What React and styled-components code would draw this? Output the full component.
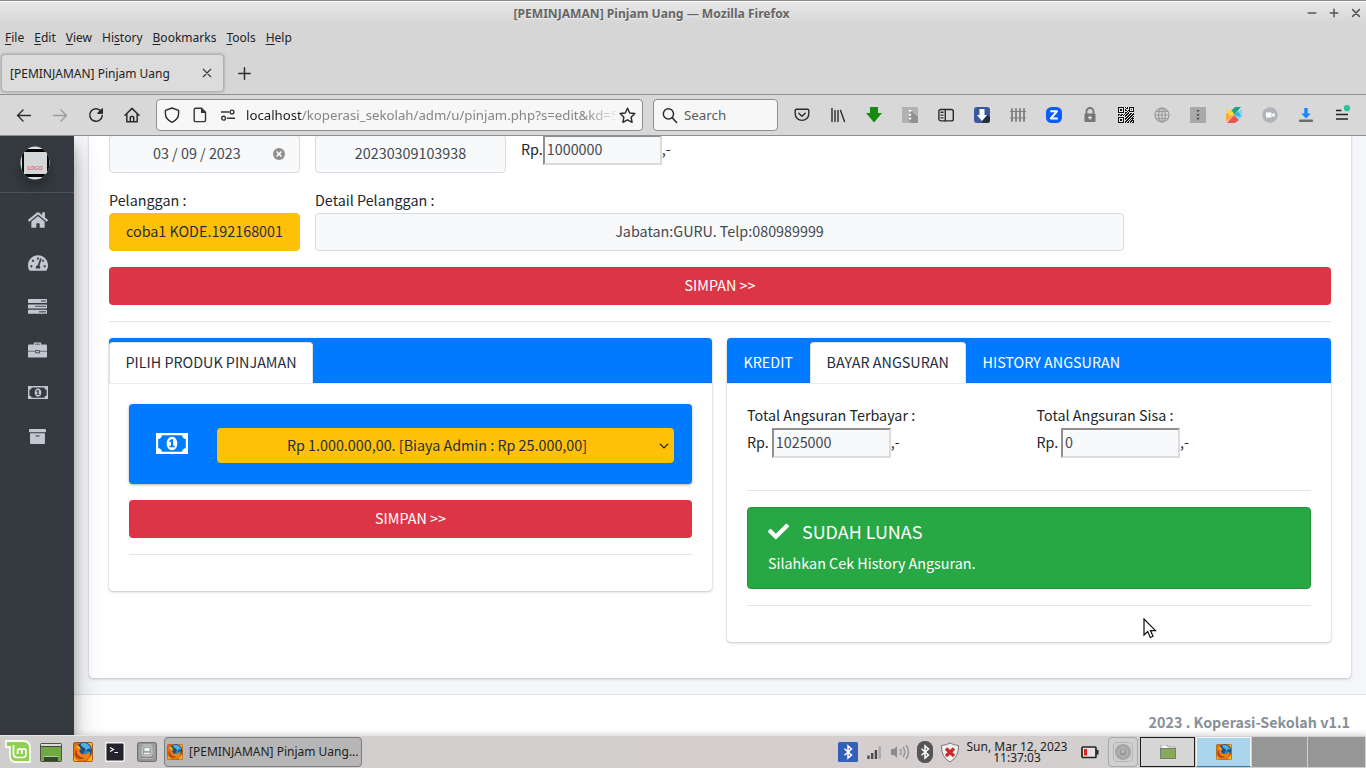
import React from "react";
import styled, { createGlobalStyle } from "styled-components";
import { FaHome, FaTachometerAlt, FaArchive, FaCheck } from "react-icons/fa";

const Global = createGlobalStyle`
  * { box-sizing: border-box; }
  body { margin: 0; overflow: hidden; }
  button, input { font: inherit; }
  svg { display: block; flex: none; }
`;

const Desktop = styled.div`
  width: 1366px; height: 768px; display: flex; flex-direction: column; overflow: hidden;
  font-family: "Noto Sans", sans-serif; font-size: 12px; color: #222; background: #d6d6d6;
`;

/* ---------- browser chrome ---------- */
const TitleBar = styled.header`
  height: 27px; flex: none; display: flex; align-items: center; padding: 0 2px 2px 0;
  border-top: 1px solid #8b8b8b; box-shadow: inset 0 1px #fff;
  background: linear-gradient(#e9e9e9, #d6d6d6 22px);
`;
const WindowTitle = styled.div`
  width: 1303px; text-align: center; font-weight: 700; font-size: 12.1px; color: #666;
  text-shadow: 0 1px #f0f0f0; white-space: nowrap;
`;
const WindowButtons = styled.div`display: flex; gap: 10px; margin-left: 3px;`;
const MenuBar = styled.nav`
  height: 21px; flex: none; display: flex; align-items: center; gap: 10px; padding-left: 5px;
  font-size: 12.02px; line-height: 20px;
  u { text-underline-offset: 2px; }
`;
const TabStrip = styled.div`
  height: 47px; flex: none; display: flex; align-items: center; padding: 5px 0 0 1px;
  border-bottom: 1px solid #8f8f8f;
`;
const Tab = styled.div`
  width: 223px; height: 38px; margin-bottom: 1px; border-radius: 4px; background: #dcdcdc; border: 1px solid #b3b3b3;
  box-shadow: 0 0 3px rgba(0,0,0,.3); display: flex; align-items: center;
  justify-content: space-between; padding: 0 11px 0 8px;
`;
const NewTab = styled.div`margin-left: 14px;`;
const Toolbar = styled.div`
  height: 41px; flex: none; display: flex; align-items: center; padding-left: 6px;
  background: #d8d8d8; border-bottom: 1px solid #8f8f8f;
`;
const ToolCell = styled.div`
  width: 36px; height: 32px; flex: none; display: flex; align-items: center; justify-content: center;
`;
const Field = styled.div`
  width: ${p => p.$w}px; height: 32px; flex: none; display: flex; align-items: center; gap: ${p => p.$gap}px;
  background: #f7f7f7; border: 1px solid #8f8f8f; border-radius: 4px; margin-left: ${p => p.$ml}px;
  padding: 0 6px 0 7px; font-size: 13.33px; color: #5b5b5b;
`;
const Url = styled.div`
  flex: 1; overflow: hidden; white-space: nowrap; margin: 0 -9px 0 -2px; color: #858585; font-size: 13.22px;
  -webkit-mask-image: linear-gradient(90deg, #000 338px, transparent 374px);
  b { font-weight: 400; color: #1c1c1c; }
`;
const Extensions = styled.div`display: flex; margin-left: 6px;`;

/* ---------- page ---------- */
const Viewport = styled.div`
  height: 599px; flex: none; display: flex; overflow: hidden; background: #f4f6f9; color: #212529;
  font-family: "Noto Sans CJK SC", sans-serif; font-size: 14.33px; line-height: 24px;
`;
const Sidebar = styled.aside`
  width: 74px; flex: none; background: #343a40; z-index: 2; color: #c2c7d0;
  box-shadow: 0 14px 28px rgba(0,0,0,.25), 0 10px 10px rgba(0,0,0,.22);
`;
const Brand = styled.div`
  height: 57px; border-bottom: 1px solid #4b545c; display: flex; justify-content: center; padding: 10px 4px 0 0;
  svg { filter: drop-shadow(0 8px 6px rgba(0,0,0,.25)); }
`;
const NavItem = styled.div`
  height: 43.3px; display: flex; align-items: center; justify-content: center; padding-left: 1px;
`;
const NavList = styled.div`padding-top: 5px;`;
const Main = styled.main`flex: 1; display: flex; flex-direction: column;`;
const PageCard = styled.section`
  margin: -5px 15px 0; height: 547px; background: #fff; border-radius: 4px; padding: 4px 20px 0; flex: none;
  box-shadow: 0 0 1px rgba(0,0,0,.25), 0 1px 3px rgba(0,0,0,.2);
`;
const Row = styled.div`display: flex; gap: 15px; align-items: flex-start; margin-bottom: ${p => p.$mb || 0}px;`;
const Group = styled.div`width: ${p => p.$w}px; flex: none;`;
const Label = styled.label`display: block; height: 24px; line-height: 22px; white-space: nowrap;`;
const Control = styled.div`
  width: ${p => p.$w}px; height: 38px; flex: none; border: 1px solid ${p => p.$warn ? "#ffc107" : "#d8dbdf"};
  border-radius: 4px; background: ${p => p.$warn ? "#ffc107" : "#f8f9fa"};
  color: ${p => p.$warn ? "#1f2d3d" : "#42484e"}; padding-bottom: 2px;
  display: flex; align-items: center; justify-content: center; white-space: nowrap;
`;
const DateControl = styled(Control)`
  justify-content: space-between; padding: 0 13px 2px 43px;
  svg { margin-top: 2px; }
`;
const Money = styled.div`display: flex; height: 30px; line-height: 28px;`;
const MoneyInput = styled.div`
  width: 119px; height: 30px; border: 2px solid; border-color: #8f8f8f #dcdcdc #dcdcdc #8f8f8f;
  background: #f8f9fa; color: #42484e; padding: 0 2px; line-height: 24px; margin-left: ${p => p.$ml}px;
`;
const DangerButton = styled.button`
  display: block; width: 100%; height: 38px; border: 0; border-radius: 4px; background: #dc3545; color: #fff; padding: 0 0 2px;
`;
const Rule = styled.hr`
  border: 0; height: 1px; background: #e3e4e5; margin: ${p => p.$m || "16px 0"};
`;
const TabCard = styled.section`
  width: ${p => p.$w}px; height: ${p => p.$h}px; flex: none; background: #fff; border-radius: 4px;
  box-shadow: 0 0 1px rgba(0,0,0,.3), 0 1px 3px rgba(0,0,0,.2);
`;
const TabHead = styled.div`
  height: 45px; background: #007bff; border-radius: 4px 4px 0 0; padding-top: 4px; display: flex;
`;
const TabLink = styled.div`
  width: ${p => p.$w}px; height: 41px; line-height: 37px; padding-left: 15.5px; white-space: nowrap;
  border: 1px solid ${p => p.$active ? "#dee2e6" : "transparent"}; border-bottom: 0; border-radius: 4px 4px 0 0;
  background: ${p => p.$active ? "#fff" : "transparent"}; color: ${p => p.$active ? "#1f2d3d" : "#fff"};
`;
const TabBody = styled.div`padding: 20px 20px 0; border-top: 1px solid #e8ebee;`;
const InfoBox = styled.div`
  height: 80px; border-radius: 4px; background: #007bff; box-shadow: 0 0 1px rgba(0,0,0,.125), 0 1px 3px rgba(0,0,0,.3);
  display: flex; align-items: center; color: #fff; padding: 0 18px 0 27px; justify-content: space-between; margin-bottom: 16px;
`;
const Select = styled.div`
  width: 457px; height: 35px; margin-top: 3px; border-radius: 4px; background: #ffc107; color: #1f2d3d;
  display: flex; align-items: center; padding: 0 5px 0 0;
  span { flex: 1; text-align: center; padding-bottom: 2px; padding-right: 2px; }
`;
const Alert = styled.div`
  height: 82px; background: #28a745; border: 1px solid #23923d; border-radius: 4px; color: #fff; padding: 11px 20px;
`;
const AlertTitle = styled.h5`
  margin: 0 0 8px; font-size: 17.95px; font-weight: 400; line-height: 24px; display: flex; align-items: center; gap: 13px;
`;
const Footer = styled.footer`
  margin-top: 16px; flex: 1; border-top: 1px solid #dee2e6; background: #fff; text-align: right;
  padding: 15px 16px 0 0; font-weight: 700; color: #869099; line-height: 24px;
`;

/* ---------- desktop panel ---------- */
const Panel = styled.footer`
  height: 33px; flex: none; display: flex; align-items: center; border-top: 1px solid #e7e5e5;
  background: linear-gradient(90deg, #d0cecd, #d3cecd 50%, #d5cfcf 75%, #d0d0d0 85%); position: relative; z-index: 5;
  box-shadow: 0 -2px 5px rgba(0,0,0,.12);
`;
const Launcher = styled.div`width: ${p => p.$w || 32}px; display: flex; justify-content: center; flex: none;`;
const TaskButton = styled.div`
  width: 198px; height: 30px; margin-left: 1px; border: 1px solid #7d7d7d; border-radius: 4px; background: #b6b6b6;
  display: flex; align-items: center; gap: 6px; padding-left: 2px; white-space: nowrap; font-size: 12px;
  span { margin-top: -2px; }
`;
const Tray = styled.div`margin-left: auto; display: flex; align-items: center; height: 32px;`;
const TrayIcons = styled.div`display: flex; align-items: center; gap: 7px;`;
const Clock = styled.div`
  width: 106px; margin-left: 4px; text-align: center; font-size: 12px; line-height: 11px; white-space: nowrap; padding-bottom: 1px;
`;
const PanelToggle = styled.div`
  width: 30px; height: 30px; margin-left: 9px; border: 1px solid #a8a8a8; border-radius: 4px;
  display: flex; align-items: center; justify-content: center;
`;
const Workspace = styled.div`
  width: ${p => p.$w || 55}px; height: 30px; margin-left: ${p => p.$ml || 1}px; background: ${p => p.$bg};
  border: ${p => p.$border || "0"}; border-bottom: ${p => p.$bottom || p.$border || "0"};
  display: flex; align-items: center; justify-content: center;
`;
const Pointer = styled.svg`position: absolute; left: 1143px; top: 618px; z-index: 9;`;

/* ---------- drawings ---------- */
const Line = ({ d, s = 16, w = 1.4, c = "#2b2b2b", children }) => (
  <svg width={s} height={s} viewBox="0 0 16 16" fill="none" stroke={c} strokeWidth={w} strokeLinecap="round" strokeLinejoin="round">
    {d && <path d={d} />}{children}
  </svg>
);
const Close = ({ s = 10, c = "#333", w = 1.6 }) => <Line s={s} w={w} c={c} d="M2 2L14 14M14 2L2 14" />;
const Banknote = ({ w = 32 }) => (
  <svg width={w} height={w * 0.66} viewBox="0 0 32 21" fill="currentColor">
    <path fillRule="evenodd" d="M0 0h32v21H0zM6 2.200Q5.500 5.500 2.200 6v9Q5.500 15.500 6 18.800h20Q26.500 15.500 29.800 15V6Q26.500 5.500 26 2.200z" />
    <path fillRule="evenodd" d="M16 3.800c3.300 0 5.300 3 5.300 6.700s-2 6.700-5.300 6.700-5.300-3-5.300-6.700 2-6.700 5.300-6.700zM13.300 7.600v1.600l1.700-.5v3.900h-1.700v1.500h5.500v-1.500h-1.700V6.300h-1.500z" />
  </svg>
);
const Firefox = ({ s = 20 }) => (
  <svg width={s} height={s} viewBox="0 0 20 20">
    <rect x=".5" y=".5" width="19" height="19" rx="1.5" fill="#d9690c" stroke="#a85a16" />
    <path d="M1 13c1 4 3 6 7 6H1zM19 8V1h-6c4 1 5 3 6 7zM19 13v6h-5z" fill="#fbb616" />
    <circle cx="11" cy="8.300" r="8" fill="#1b4f86" />
    <path d="M8 1.500c5-1.500 9.500 1.500 9.500 6-2-2-3-1-4 1-2-1-1-3-3-3-2-1-3-2.500-2.500-4z" fill="#4fb2de" />
    <path d="M12 8c2 1 3 2 5 1-1 3-4 4-7 3z" fill="#2f86bd" />
    <path d="M2.500 2c1 2 2.500 1.500 3.700 3 1 1 2.300 1.600 1.300 2.800-2 .8-1 2.700 1 4 3 1.300 6 .3 8.500-2.300.5 5-2.500 9-7.500 9-7 0-10-9-7-16.500z" fill="#ee8212" />
    <path d="M3.500 6.500c-.5 5.500 2.500 9 8 9.500-3 2.200-7 1-9-2-1-3-.6-5.500 1-7.500z" fill="#bd3a12" />
    <path d="M4 3.500c2 0 3 2 3 3-2 0-3-1-3-3z" fill="#fccb35" />
  </svg>
);
const Bt = "M4.500 4.700l7 6.300L8 14V2l3.500 3-7 6.300";
const Logo = () => (
  <svg width="34" height="34" viewBox="0 0 34 34">
    <defs><clipPath id="round"><ellipse cx="17" cy="17" rx="14.5" ry="16.5" /></clipPath></defs>
    <g clipPath="url(#round)">
      <path fill="#d9dcdd" d="M0 0h34v34H0z" /><path fill="#080808" d="M0 3h34v3H0zM0 28h34v3H0zM4 6h2v22H4zM29 6h2v22h-2z" />
      <path fill="#d5d6d8" d="M6 6h23v22H6z" />
    </g>
    <text x="17" y="24.4" fontFamily="Lato" fontSize="5.4" fontWeight="700" fill="#df5c62" textAnchor="middle">LOGO</text>
  </svg>
);
const Bars = () => (
  <svg width="19" height="15" viewBox="0 0 19 15" fill="#c2c7d0">
    <rect width="19" height="4" rx=".6" /><rect y="5.4" width="19" height="4" rx=".6" /><rect y="10.8" width="19" height="4" rx=".6" />
    <path d="M13 1.3h5v1.4h-5zM7 6.7h11v1.4H7zM11 12.1h7v1.4h-7z" fill="#646a72" />
  </svg>
);
const Case = () => (
  <svg width="19" height="16" viewBox="0 0 19 16">
    <path d="M6.500 3V1.200h6V3" fill="none" stroke="#c2c7d0" strokeWidth="1.3" />
    <rect y="2.6" width="19" height="13" rx="1.2" fill="#c2c7d0" />
    <path d="M0 9.200h7M12 9.200h7" stroke="#6b7078" strokeWidth="1.1" /><path d="M7.500 8.600h4v2.300h-4z" fill="none" stroke="#4d535b" />
  </svg>
);
const Archive = ({ c, a, t }) => (
  <svg width="16" height="16" viewBox="0 0 16 16">
    <path fill={c} d="M0 0h16v16H0z" /><path fill={t} d="M9 4l7 6v6H9l-3-3z" opacity=".55" />
    <path d="M6.400 3h3.200L8 5.400zM6.400 7h3.200L8 9.400zM6.400 10.700h3.200L8 13.400z" fill={a} />
  </svg>
);
const qrRows = ["1111110101011111", "1000010011010001", "1011010100010101", "1011010110110001", "1000010001011111", "1111110110100000", "0000000101101101", "1101101011011011", "1011010110110110", "0000000101101101", "1111110011011010", "1000010110110111", "1011010101101010", "1011010011010111", "1000010110101101", "1111110101101011"];
const Qr = () => (
  <svg width="16" height="16" viewBox="0 0 16 16" shapeRendering="crispEdges">
    <path fill="#e6e6e6" d="M0 0h16v16H0z" />
    {qrRows.map((r, y) => [...r].map((v, x) => v === "1" && <rect key={x + "-" + y} x={x} y={y} width="1" height="1" fill="#111" />))}
  </svg>
);
const Pinwheel = () => (
  <svg width="16" height="16" viewBox="0 0 16 16">
    <path d="M8 8L5 4l4-4h6z" fill="#20a48b" /><path d="M8 8l8-6v8l-3 2z" fill="#72dcf1" /><path d="M8 8l4-4 3 6z" fill="#32b5d0" />
    <path d="M8 8l5 5-4 3H1z" fill="#ef5350" /><path d="M8 8L0 15V7l4-3z" fill="#ffa83e" /><path d="M0 1l7 4 1 3-5 1z" fill="#ffd83a" />
  </svg>
);
const Globe = () => (
  <Line c="#9b9b9b" w={1.2}><circle cx="8" cy="8" r="7" /><ellipse cx="8" cy="8" rx="3.4" ry="7" /><path d="M1 8h14M8 1v14M2 4.500h12M2 11.500h12" /></Line>
);
const extensions = [
  <Line w={1.4} d="M2.500 2.200h11a1.300 1.300 0 011.300 1.300V7a6.800 6.400 0 01-13.600 0V3.500a1.300 1.300 0 011.300-1.300zM4.800 6.200L8 9.300l3.200-3.100" />,
  <Line w={1.4} d="M2 1.500v13M5 3.500v11M8 3.500v11M10.500 3.500l4 11" />,
  <svg width="16" height="16" viewBox="0 0 16 16"><path d="M4 0h8v6h4l-8 9.500L0 6h4z" fill="#178a12" /></svg>,
  <Archive c="#b2b2b2" a="#fff" t="#777" />,
  <Line w={1.4}><rect x=".9" y="2.500" width="14.400" height="11.400" rx="2" /><path d="M7.300 2.500v11.400M3 5.300h2M3 8.100h2M3 10.900h2" /></Line>,
  <svg width="16" height="16" viewBox="0 0 16 16"><rect width="16" height="16" rx="3" fill="#3b5998" /><path d="M13 8l3 2v3q0 3-3 3H9l-1-2z" fill="#252e3c" /><path d="M5.500 2h5v6H13l-5 6-5-6h2.500z" fill="#fff" /></svg>,
  <Line c="#808080" w={1.1} d="M.5 4.500h15M.5 11h15"><path strokeWidth="1.8" d="M2 2v12M6 2v12M10 2v12M14 2v12" /></Line>,
  <svg width="16" height="16" viewBox="0 0 16 16"><rect width="16" height="16" rx="5.500" fill="#0b5cff" /><path d="M4.300 4.300h6.600l-6.100 7.200h7" fill="none" stroke="#fff" strokeWidth="2" strokeLinejoin="round" /></svg>,
  <svg width="16" height="16" viewBox="0 0 16 16"><path d="M4.500 7V4a3.500 3 0 017 0v3" fill="none" stroke="#757575" strokeWidth="1.8" /><rect x="2.500" y="6.500" width="11" height="8.500" rx="1" fill="#757575" /><path d="M8 8.700v4M6 10.700h4" stroke="#ddd" strokeWidth="1.3" /></svg>,
  <Qr />,
  <Globe />,
  <Archive c="#a9a9a9" a="#555" t="#a9a9a9" />,
  <Pinwheel />,
  <svg width="16" height="16" viewBox="0 0 16 16"><circle cx="8" cy="8" r="7.800" fill="#b1b5bb" /><path d="M4 5.500h5.500v5H4zM10 7.300l2.500-1.500v4.500L10 8.800z" fill="#fff" /></svg>,
  <svg width="16" height="16" viewBox="0 0 16 16"><path d="M6.300 1h3.400v5.500h3L8 11.500 3.300 6.500h3z" fill="#1489ff" /><rect x="1" y="12.600" width="14" height="2.400" rx="1" fill="#6c6c6c" /></svg>,
  <svg width="20" height="20" viewBox="0 0 20 20"><path d="M4 5.500h5.500M4 9.500h12M4 14h12" stroke="#222" strokeWidth="1.500" /><circle cx="15" cy="3.200" r="3.100" fill="#2ac3a2" /></svg>,
];
const menus = [["", "F", "ile"], ["", "E", "dit"], ["", "V", "iew"], ["Hi", "s", "tory"], ["", "B", "ookmarks"], ["", "T", "ools"], ["", "H", "elp"]];

export default function App() {
  return (
    <Desktop>
      <Global />
      <TitleBar>
        <WindowTitle>[PEMINJAMAN] Pinjam Uang — Mozilla Firefox</WindowTitle>
        <WindowButtons>
          <Line s={12} w={2} c="#555" d="M3 8h10" /><Line s={12} w={2} c="#555" d="M3 8h10M8 3v10" /><Line s={12} w={2} c="#555" d="M3.500 3.500l9 9M12.500 3.500l-9 9" />
        </WindowButtons>
      </TitleBar>
      <MenuBar>{menus.map(([a, b, c]) => <span key={c}>{a}<u>{b}</u>{c}</span>)}</MenuBar>
      <TabStrip>
        <Tab><span>[PEMINJAMAN] Pinjam Uang</span><Close w={1.7} /></Tab>
        <NewTab><Line s={13} w={1.8} d="M8 1v14M1 8h14" /></NewTab>
      </TabStrip>
      <Toolbar>
        <ToolCell><Line d="M14.500 8.500H1.500M7 3L1.500 8.500 7 14" /></ToolCell>
        <ToolCell><Line c="#9b9b9b" d="M1.500 8.500h13M9 3l5.500 5.500L9 14" /></ToolCell>
        <ToolCell><Line w={1.5} d="M13.300 4.500A6.300 6.300 0 1014.300 8.500"><path d="M14.300 2v4.300H10z" fill="#222" /></Line></ToolCell>
        <ToolCell><Line w={1.5} d="M1 8.200L8 1.400l7 6.800M2.800 7v7.800h10.400V7M6.300 14.500v-4a1 1 0 011-1h1.400a1 1 0 011 1v4" /></ToolCell>
        <Field $w={487} $ml={6} $gap={12}>
          <Line d="M8 1l6.600 2.400v3.400C14.600 11 12 13.500 8 15.300 4 13.500 1.400 11 1.400 6.800V3.400z" />
          <svg width="16" height="16" viewBox="0 0 16 16"><path d="M3.500 1.300h6l4 4v8a1.300 1.300 0 01-1.300 1.300H3.500a1.300 1.300 0 01-1.300-1.300V2.600a1.300 1.300 0 011.300-1.300z" fill="none" stroke="#333" strokeWidth="1.4" /><path d="M9 1v5h5z" fill="#333" /></svg>
          <svg width="16" height="16" viewBox="0 0 16 16" fill="none" stroke="#333" strokeWidth="1.4"><path d="M1 5h8M7 11.200h8" /><circle cx="12" cy="5" r="1.9" /><circle cx="3.6" cy="11.2" r="1.9" /></svg>
          <Url><b>localhost</b>/koperasi_sekolah/adm/u/pinjam.php?s=edit&amp;kd=5</Url>
          <Line s={17} d="M8 1.200l2.100 4.400 4.800.6-3.500 3.400.9 4.800L8 12.100l-4.300 2.300.9-4.800L1.100 6.200l4.800-.6z" />
        </Field>
        <Field $w={125} $ml={10} $gap={6}>
          <Line s={17}><circle cx="7" cy="6.5" r="4.8" /><path d="M10.500 10l4.200 4.500" /></Line>
          <span>Search</span>
        </Field>
        <Extensions>{extensions.map((e, i) => <ToolCell key={i}>{e}</ToolCell>)}</Extensions>
      </Toolbar>

      <Viewport>
        <Sidebar>
          <Brand><Logo /></Brand>
          <NavList>
            <NavItem><FaHome size={20} /></NavItem>
            <NavItem><FaTachometerAlt size={20} /></NavItem>
            <NavItem><Bars /></NavItem>
            <NavItem><Case /></NavItem>
            <NavItem><Banknote w={20} /></NavItem>
            <NavItem><FaArchive size={17} /></NavItem>
          </NavList>
        </Sidebar>
        <Main>
          <PageCard>
            <Row $mb={16}>
              <DateControl $w={191}>
                <span>03 / 09 / 2023</span>
                <svg width="14" height="14" viewBox="0 0 14 14"><circle cx="7" cy="7" r="6" fill="#8f8f8f" /><path d="M4.500 4.500l5 5M9.500 4.500l-5 5" stroke="#fff" strokeWidth="1.5" /></svg>
              </DateControl>
              <Control $w={191}>20230309103938</Control>
              <Money>Rp.<MoneyInput $ml={0}>1000000</MoneyInput>,-</Money>
            </Row>
            <Row $mb={16}>
              <Group $w={191}><Label>Pelanggan :</Label><Control $w={191} $warn>coba1 KODE.192168001</Control></Group>
              <Group $w={809}><Label>Detail Pelanggan :</Label><Control $w={809}>Jabatan:GURU. Telp:080989999</Control></Group>
            </Row>
            <DangerButton>SIMPAN &gt;&gt;</DangerButton>
            <Rule />
            <Row>
              <TabCard $w={603} $h={253}>
                <TabHead><TabLink $w={204} $active>PILIH PRODUK PINJAMAN</TabLink></TabHead>
                <TabBody>
                  <InfoBox>
                    <Banknote w={32} />
                    <Select><span>Rp 1.000.000,00. [Biaya Admin : Rp 25.000,00]</span><Line s={10} w={2.2} c="#222" d="M2 5l6 6 6-6" /></Select>
                  </InfoBox>
                  <DangerButton>SIMPAN &gt;&gt;</DangerButton>
                  <Rule />
                </TabBody>
              </TabCard>
              <TabCard $w={604} $h={304}>
                <TabHead>
                  <TabLink $w={83}>KREDIT</TabLink><TabLink $w={156} $active>BAYAR ANGSURAN</TabLink><TabLink $w={171}>HISTORY ANGSURAN</TabLink>
                </TabHead>
                <TabBody>
                  <Row>
                    <Group $w={274.5}><Label>Total Angsuran Terbayar :</Label><Money>Rp.<MoneyInput $ml={3}>1025000</MoneyInput>,-</Money></Group>
                    <Group $w={260}><Label>Total Angsuran Sisa :</Label><Money>Rp.<MoneyInput $ml={2.8}>0</MoneyInput>,-</Money></Group>
                  </Row>
                  <Rule $m="32px 0 16px" />
                  <Alert>
                    <AlertTitle><FaCheck size={21} />SUDAH LUNAS</AlertTitle>
                    Silahkan Cek History Angsuran.
                  </Alert>
                  <Rule />
                </TabBody>
              </TabCard>
            </Row>
          </PageCard>
          <Footer>2023 . Koperasi-Sekolah v1.1</Footer>
        </Main>
      </Viewport>

      <Panel>
        <Launcher $w={35}>
          <svg width="26" height="24" viewBox="0 0 26 24"><path d="M1 1h17q7 0 7 7v14H11q-6 0-6-6V7H1z" fill="#8fcf52" stroke="#f6faf2" strokeWidth="1.8" /><path d="M8.500 5v8.500q0 4 4 4h5q3.500 0 3.500-3.500v-3q0-2.200-2.100-2.200t-2.100 2.200v3m0-3q0-2.200-2.100-2.200t-2.100 2.200v3" fill="none" stroke="#fff" strokeWidth="1.700" /></svg>
        </Launcher>
        <Launcher>
          <svg width="22" height="19" viewBox="0 0 22 19"><rect x=".5" y=".5" width="21" height="18" rx="1" fill="#71a944" stroke="#4d5148" /><path d="M1 1h20v3H1z" fill="#d9dcd5" /><path d="M1 3.500h20" stroke="#444" /><path d="M4 13h14v5H4z" fill="#36482a" /><path d="M4 13.500h14" stroke="#b5c8a5" /></svg>
        </Launcher>
        <Launcher><Firefox /></Launcher>
        <Launcher>
          <svg width="20" height="20" viewBox="0 0 20 20"><rect x=".7" y=".7" width="18.6" height="18.6" rx="1.5" fill="#24222a" stroke="#f3f3f3" strokeWidth="1.500" /><path d="M5 5.500l3.500 2-3.500 2M9.500 10.500H13" fill="none" stroke="#fff" strokeWidth="1.2" /></svg>
        </Launcher>
        <Launcher>
          <svg width="20" height="20" viewBox="0 0 20 20"><rect x=".5" y=".5" width="19" height="19" rx="2" fill="#929495" stroke="#6f7172" /><rect x="3" y="2.500" width="14" height="14" rx="1.500" fill="#838586" stroke="#b5b7b8" /><rect x="5" y="4" width="10" height="10" rx="1" fill="#a0a2a3" stroke="#dadada" /><rect x="7.500" y="6" width="5" height="3" fill="#edf6fb" /><path d="M7 11.500h6" stroke="#eee" strokeWidth="1.500" /></svg>
        </Launcher>
        <TaskButton><Firefox s={16} /><span>[PEMINJAMAN] Pinjam Uang...</span></TaskButton>
        <Tray>
          <TrayIcons>
            <svg width="20" height="20" viewBox="0 0 20 20"><rect width="20" height="20" rx="1.5" fill="#3560b8" /><g transform="translate(2 2)"><path d={Bt} stroke="#fff" fill="none" strokeWidth="1.500" /></g></svg>
            <svg width="18" height="16" viewBox="-1 0 18 16"><path d="M2.500 11.500V15M6.200 9v6M9.900 6v9" stroke="#4b4b4b" strokeWidth="2.4" /><path d="M13.700 2v13" stroke="#aaa" strokeWidth="2.4" /></svg>
            <svg width="20" height="18" viewBox="0 0 20 18"><path d="M1 6h3l3-3v12l-3-3H1z" fill="#8c8c8c" /><path d="M10 6q2 3 0 6M13 4q3.500 5 0 10M16 2q5 7 0 14" fill="none" stroke="#999" strokeWidth="1.6" /></svg>
            <svg width="16" height="22" viewBox="0 0 16 22"><rect width="16" height="22" rx="7.500" fill="#555" /><g transform="translate(0 3)"><path d={Bt} stroke="#fff" fill="none" strokeWidth="1.500" /></g></svg>
            <svg width="20" height="21" viewBox="0 0 20 21"><path d="M10 1q3 2 8.500 2.500Q19 15 10 20 1 15 1.500 3.500 7 3 10 1z" fill="#f1f1f1" stroke="#777" /><path d="M6 6.500l8 7.500M14 6.500L6 14" stroke="#d0272c" strokeWidth="3.400" /></svg>
          </TrayIcons>
          <Clock>Sun, Mar 12, 2023<br />11:37:03</Clock>
          <TrayIcons><svg style={{ marginLeft: 11 }} width="18" height="13" viewBox="0 0 18 13"><rect x="1" y="1" width="14" height="10.500" rx="1" fill="#e4e2e2" stroke="#252525" strokeWidth="1.700" /><path d="M3 3h3v6.500H3z" fill="#dc241c" /><path d="M15.500 4h2v4.500h-2z" fill="#222" /></svg></TrayIcons>
          <PanelToggle><svg width="20" height="20" viewBox="0 0 20 20"><rect x=".5" y=".5" width="19" height="19" rx="3" fill="#cfcfcf" stroke="#b5b5b5" /><circle cx="10" cy="10" r="8" fill="#a5a5a5" /><circle cx="10" cy="10" r="4.500" fill="#999" stroke="#c2c2c2" /><circle cx="10" cy="9" r="2" fill="#b7b7b7" /></svg></PanelToggle>
          <Workspace $ml={2} $bg="#d6d6d6" $border="1px solid #1d1d1d">
            <svg width="16" height="14" viewBox="0 0 16 14"><path d="M1 0h6l1 2h7v4H1z" fill="#fafafa" stroke="#8d918a" strokeWidth=".7" /><rect x=".5" y="3.500" width="15" height="10" fill="#87a959" stroke="#77806f" /></svg>
          </Workspace>
          <Workspace $bg="#abd4ed" $border="1px solid #f2f4f5" $bottom="1px solid #3a79a2"><Firefox s={16} /></Workspace>
          <Workspace $bg="#969696" />
          <Workspace $w={57} $bg="#969696" /><span style={{ width: 1 }} />
        </Tray>
      </Panel>
      <Pointer width="14" height="21" viewBox="0 0 14 21"><path d="M1 1v16l3.700-3.500 2.600 6 2.700-1.200-2.500-5.700H12.500z" fill="#fff" stroke="#111" strokeWidth="1.200" /></Pointer>
    </Desktop>
  );
}
